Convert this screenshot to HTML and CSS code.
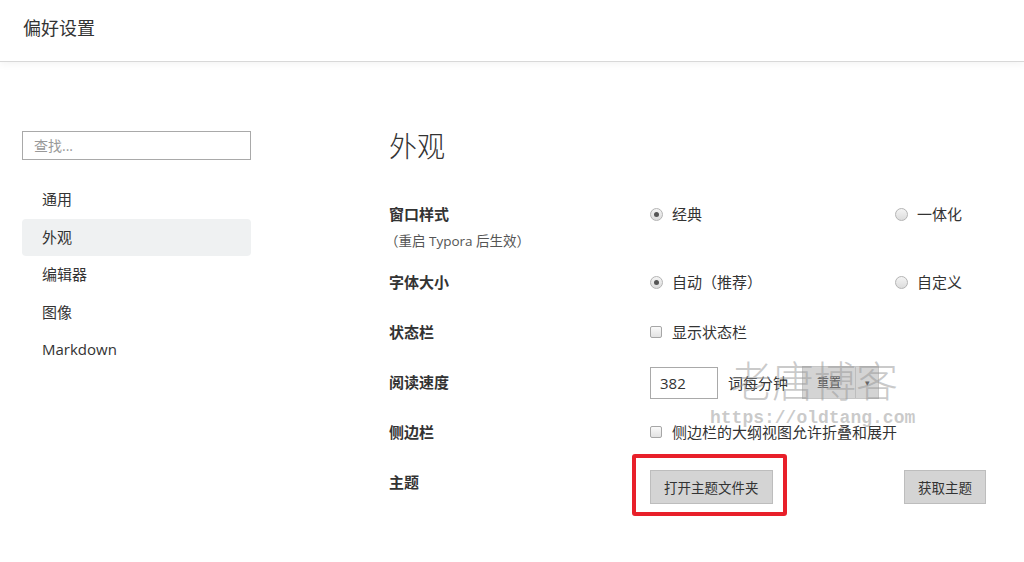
FILE: index.html
```html
<!DOCTYPE html>
<html lang="zh-CN">
<head>
    <meta charset="UTF-8">
    <meta name="viewport" content="width=device-width, initial-scale=1.0">
    <title>偏好设置</title>
    <link rel="stylesheet" href="styles.css">
</head>
<body>
    <div class="header">
        <h1>偏好设置</h1>
    </div>

    <div class="layout">
        <div class="sidebar">
            <input type="text" class="search" placeholder="查找...">
            <ul class="nav">
                <li>通用</li>
                <li class="active">外观</li>
                <li>编辑器</li>
                <li>图像</li>
                <li>Markdown</li>
            </ul>
        </div>

        <div class="main">
            <h2>外观</h2>

            <div class="row row-tall">
                <div class="label">
                    <div>窗口样式</div>
                    <div class="note">（重启 Typora 后生效）</div>
                </div>
                <label class="option"><span class="radio checked"></span>经典</label>
                <label class="option"><span class="radio"></span>一体化</label>
            </div>

            <div class="row">
                <div class="label">字体大小</div>
                <label class="option"><span class="radio checked"></span>自动（推荐）</label>
                <label class="option"><span class="radio"></span>自定义</label>
            </div>

            <div class="row">
                <div class="label">状态栏</div>
                <label class="option wide"><span class="checkbox"></span>显示状态栏</label>
            </div>

            <div class="row">
                <div class="label">阅读速度</div>
                <div class="speed wide">
                    <input type="text" class="speed-input" value="382">
                    <span>词每分钟</span>
                    <div class="split-button">
                        <span class="split-main">重置</span>
                        <span class="split-caret">▾</span>
                    </div>
                </div>
            </div>

            <div class="row">
                <div class="label">侧边栏</div>
                <label class="option wide"><span class="checkbox"></span>侧边栏的大纲视图允许折叠和展开</label>
            </div>

            <div class="row">
                <div class="label">主题</div>
                <div class="btn-cell">
                    <button class="btn">打开主题文件夹</button>
                    <span class="highlight"></span>
                </div>
                <div class="btn-cell">
                    <button class="btn btn-right">获取主题</button>
                </div>
            </div>
        </div>
    </div>

    <div class="watermark">
        <div class="wm-title">老唐博客</div>
        <div class="wm-url">https://oldtang.com</div>
    </div>
</body>
</html>
```

FILE: styles.css
```css
* {
    margin: 0;
    padding: 0;
    box-sizing: border-box;
}

body {
    font-family: "Open Sans", "Noto Sans CJK SC", sans-serif;
    color: #333;
    background: #fff;
    font-size: 15px;
    line-height: 22px;
}

.header {
    height: 62px;
    padding-left: 23px;
    display: flex;
    align-items: center;
    border-bottom: 1px solid #d8d8d8;
    box-shadow: 0 2px 8px rgba(0, 0, 0, 0.05);
}

.header h1 {
    font-size: 18px;
    font-weight: normal;
    color: #333;
    margin-top: -6px;
}

.layout {
    display: flex;
}

.sidebar {
    width: 229px;
    margin-left: 22px;
    padding-top: 69px;
}

.search {
    width: 229px;
    height: 29px;
    border: 1px solid #a9a9a9;
    padding: 0 11px;
    font-family: inherit;
    font-size: 14px;
    color: #333;
    outline: none;
}

.search::placeholder {
    color: #999;
}

.nav {
    list-style: none;
    margin-top: 21px;
}

.nav li {
    height: 37px;
    line-height: 37px;
    padding-left: 20px;
    color: #333;
    border-radius: 4px;
    margin-bottom: 0.5px;
}

.nav li.active {
    background: #eff1f2;
}

.main {
    margin-left: 138px;
    padding-top: 64px;
    flex: 1;
}

.main h2 {
    font-size: 28px;
    font-weight: 300;
    line-height: 40px;
    color: #333;
    margin-bottom: 37px;
}

.row {
    display: grid;
    grid-template-columns: 261px 245px 1fr;
    align-items: start;
    height: 50px;
}

.row-tall {
    height: 68px;
}

.label {
    font-weight: bold;
    color: #333;
}

.note {
    font-weight: normal;
    font-size: 13.5px;
    color: #555;
    margin-top: 5px;
    margin-left: -4px;
}

.option {
    display: flex;
    align-items: center;
    color: #333;
}

.wide {
    grid-column: 2 / 4;
}

.radio {
    width: 13px;
    height: 13px;
    border-radius: 50%;
    border: 1px solid #b4b4b4;
    background: linear-gradient(#f4f4f4, #dcdcdc);
    margin-right: 9px;
    position: relative;
}

.radio.checked::after {
    content: "";
    position: absolute;
    left: 3px;
    top: 3px;
    width: 5px;
    height: 5px;
    border-radius: 50%;
    background: #555;
}

.checkbox {
    width: 12px;
    height: 12px;
    border: 1px solid #a6a6a6;
    border-radius: 2px;
    background: linear-gradient(#fafafa, #e2e2e2);
    margin-right: 10px;
}

.speed {
    display: flex;
    align-items: center;
    margin-top: -5px;
}

.speed-input {
    width: 68px;
    height: 32px;
    border: 1px solid #a9a9a9;
    padding: 0 9px;
    font-family: inherit;
    font-size: 15px;
    color: #333;
    outline: none;
}

.speed span {
    margin-left: 10px;
}

.split-button {
    display: flex;
    height: 33px;
    margin-left: 14px;
    background: #d4d4d4;
    border: 1px solid #c6c6c6;
}

.speed .split-main {
    margin: 0;
    width: 53px;
    line-height: 31px;
    text-align: center;
    font-size: 12px;
    color: #555;
    border-right: 1px solid #bdbdbd;
}

.speed .split-caret {
    margin: 0;
    width: 22px;
    line-height: 31px;
    text-align: center;
    font-size: 9px;
    color: #666;
}

.btn-cell {
    position: relative;
    margin-top: -1px;
}

.btn {
    height: 34px;
    padding: 0 13px;
    background: #d4d4d4;
    border: 1px solid #bdbdbd;
    font-family: inherit;
    font-size: 13.5px;
    color: #333;
}

.btn-right {
    margin-left: 9px;
}

.highlight {
    position: absolute;
    left: -18px;
    top: -16px;
    width: 155px;
    height: 62px;
    border: 4px solid #e8202a;
    border-radius: 3px;
}

.watermark {
    position: absolute;
    left: 710px;
    top: 358px;
    width: 210px;
    pointer-events: none;
}

.wm-title {
    margin-left: 20px;
    font-size: 42px;
    line-height: 46px;
    font-weight: 300;
    color: rgba(150, 150, 150, 0.5);
}

.wm-url {
    margin-top: 2px;
    font-family: "Liberation Mono", monospace;
    font-size: 18px;
    line-height: 24px;
    font-weight: bold;
    color: rgba(150, 150, 150, 0.5);
}
```
